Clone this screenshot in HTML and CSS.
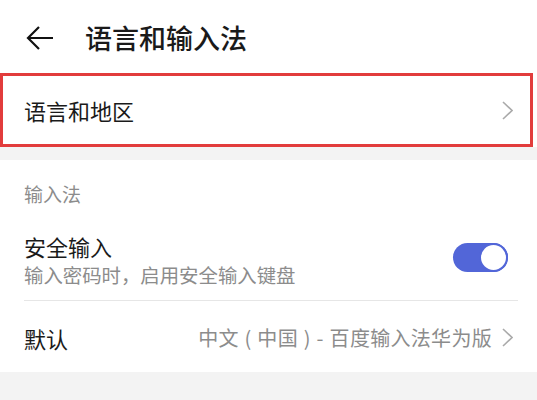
FILE: index.html
```html
<!DOCTYPE html>
<html lang="zh-CN">
<head>
    <meta charset="UTF-8">
    <meta name="viewport" content="width=device-width, initial-scale=1.0">
    <title>语言和输入法</title>
    <link rel="stylesheet" href="styles.css">
</head>
<body>

    <div class="header">
        <svg class="backIcon" width="28" height="28" viewBox="0 0 28 28">
            <path d="M27 14H2M13 3L2 14l11 11" fill="none" stroke="#111" stroke-width="2.2"/>
        </svg>
        <div class="title">语言和输入法</div>
    </div>

    <div class="regionRow">
        <div class="rowLabel">语言和地区</div>
        <svg class="chevron" width="11" height="19" viewBox="0 0 11 19">
            <path d="M1 1l9 8.5L1 18" fill="none" stroke="#aaa" stroke-width="1.6"/>
        </svg>
    </div>

    <div class="gap"></div>

    <div class="section">
        <div class="sectionTitle">输入法</div>

        <div class="switchRow">
            <div class="texts">
                <div class="rowLabel">安全输入</div>
                <div class="subLabel">输入密码时，启用安全输入键盘</div>
            </div>
            <div class="toggle"><div class="knob"></div></div>
        </div>

        <div class="divider"></div>

        <div class="defaultRow">
            <div class="rowLabel">默认</div>
            <div class="value">中文 ( 中国 ) - 百度输入法华为版</div>
            <svg class="chevron" width="11" height="19" viewBox="0 0 11 19">
                <path d="M1 1l9 8.5L1 18" fill="none" stroke="#aaa" stroke-width="1.6"/>
            </svg>
        </div>
    </div>

    <div class="bottomGap"></div>

</body>
</html>
```

FILE: styles.css
```css
body {
    margin: 0;
    padding: 0;
    width: 537px;
    height: 400px;
    overflow: hidden;
    background: #fff;
    font-family: "Noto Sans CJK SC", "Noto Sans", sans-serif;
    color: #1a1a1a;
}

.header {
    height: 73px;
    display: flex;
    align-items: center;
    padding-left: 26px;
    padding-top: 2px;
    box-sizing: border-box;
}

.backIcon {
    flex: none;
}

.title {
    margin-left: 31px;
    font-size: 27px;
    line-height: 30px;
    font-weight: 500;
}

.regionRow {
    height: 74px;
    margin-right: 4px;
    border: 3px solid #e23c3c;
    box-sizing: border-box;
    display: flex;
    align-items: center;
    justify-content: space-between;
    padding: 0 17px 0 21px;
}

.rowLabel {
    font-size: 22px;
    line-height: 30px;
}

.gap {
    height: 13px;
    background: #f3f3f3;
}

.section {
    background: #fff;
}

.sectionTitle {
    height: 50px;
    padding: 22px 24px 0;
    box-sizing: border-box;
    font-size: 19px;
    line-height: 24px;
    color: #8c8c8c;
}

.switchRow {
    height: 90px;
    display: flex;
    align-items: center;
    justify-content: space-between;
    padding: 10px 29px 0 24px;
    box-sizing: border-box;
}

.subLabel {
    font-size: 19.4px;
    line-height: 28px;
    color: #8c8c8c;
}

.toggle {
    width: 55px;
    height: 29px;
    border-radius: 15px;
    background: #5266d8;
    display: flex;
    justify-content: flex-end;
    margin-top: -6px;
}

.knob {
    width: 25px;
    height: 25px;
    border-radius: 50%;
    background: #fff;
    border: 2px solid #5266d8;
}

.divider {
    height: 1px;
    background: #e6e6e6;
    margin: 0 19px 0 24px;
}

.defaultRow {
    height: 71px;
    display: flex;
    align-items: center;
    padding: 2px 24px 0 24px;
    box-sizing: border-box;
}

.value {
    flex: 1;
    text-align: right;
    font-size: 20px;
    letter-spacing: 0.3px;
    word-spacing: 1px;
    color: #8c8c8c;
    margin-right: 10px;
}

.bottomGap {
    height: 28px;
    background: #f3f3f3;
}
```
